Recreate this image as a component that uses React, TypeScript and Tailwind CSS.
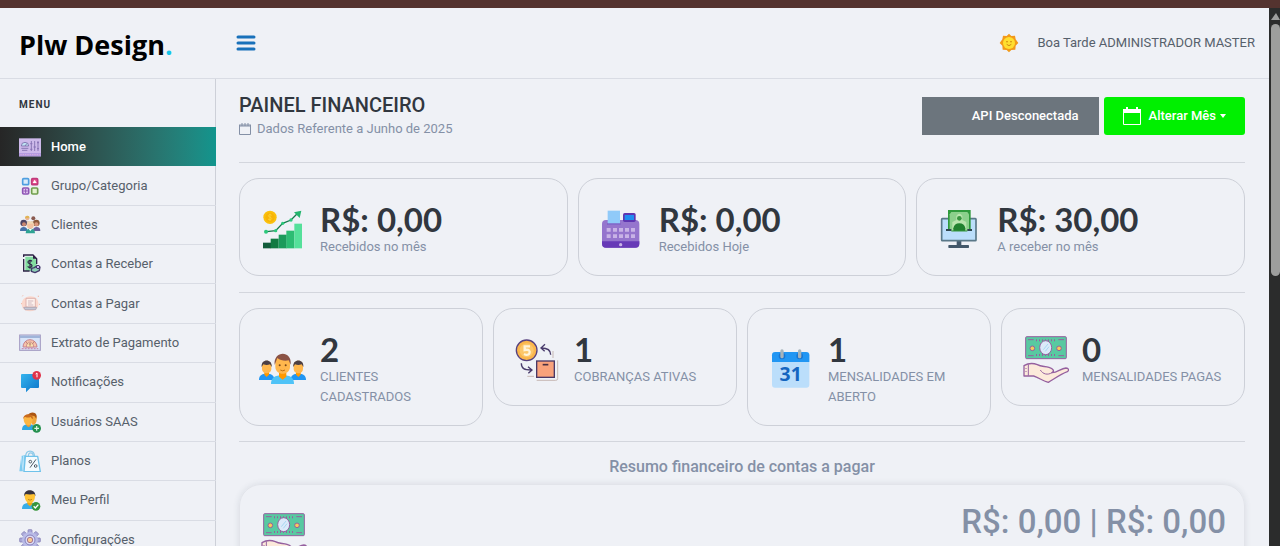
import type { ReactNode } from "react";

function MenuIcon({ children }: { children: ReactNode }) {
  return (
    <svg className="size-[22px] shrink-0" viewBox="0 0 66 66" aria-hidden="true">
      {children}
    </svg>
  );
}

function CardIcon({ children }: { children: ReactNode }) {
  return (
    <svg className="size-12 shrink-0" viewBox="0 0 144 144" aria-hidden="true">
      {children}
    </svg>
  );
}

const menuItems: { label: string; icon: ReactNode }[] = [
  {
    label: "Home",
    icon: (
      <MenuIcon>
        <rect x="0" y="7" width="66" height="54" fill="#cdb9ea" />
        <rect x="0" y="51" width="66" height="10" fill="#b49be0" />
        <path d="M7 30a11 11 0 0 1 22 0zM18 30l6-8" fill="#bfe3f3" stroke="#7b6ba8" strokeWidth="2.5" />
        <path d="M7 37h21M9 43h16M37 15v30M47 15v30M57 15v30" stroke="#7b6ba8" strokeWidth="2.5" />
        <path d="M34 23h6M44 33h6M54 20h6M34 40h6M54 38h6" stroke="#8b74b8" strokeWidth="4" />
        <path d="M4 56h58" stroke="#e9b9dc" strokeWidth="2" strokeDasharray="4 3" />
      </MenuIcon>
    )
  },
  {
    label: "Grupo/Categoria",
    icon: (
      <MenuIcon>
        <rect x="11" y="11" width="18" height="18" rx="3" fill="#d9ecfb" stroke="#4f9fe0" strokeWidth="5" />
        <rect x="38" y="11" width="18" height="18" rx="3" fill="#e8558f" stroke="#c23a7c" strokeWidth="5" />
        <rect x="11" y="39" width="18" height="18" rx="3" fill="#e9cdf3" stroke="#8d55b5" strokeWidth="5" />
        <rect x="38" y="39" width="18" height="18" rx="3" fill="#e3f2cf" stroke="#6f9d4d" strokeWidth="5" />
        <path d="M47 14l6 10H41z" fill="#fff" />
        <path d="M20 42v12M14 48h12" stroke="#8d55b5" strokeWidth="3" />
      </MenuIcon>
    )
  },
  {
    label: "Clientes",
    icon: (
      <MenuIcon>
        <circle cx="25" cy="13" r="6" fill="#e9b38f" />
        <path d="M18 13a7 7 0 0 1 14-2z" fill="#e0b354" />
        <circle cx="43" cy="13" r="6" fill="#8a5a50" />
        <path d="M18 22h14l-3 12h-8zM36 22h14l-3 12h-8z" fill="#d7bfae" />
        <circle cx="14" cy="27" r="10" fill="#4d4664" />
        <circle cx="15" cy="31" r="6" fill="#c98870" />
        <circle cx="52" cy="27" r="10" fill="#8b5a3c" />
        <circle cx="52" cy="31" r="6" fill="#d9977d" />
        <path d="M3 51c0-9 4-12 11-12s11 3 11 12z" fill="#4672a8" />
        <path d="M42 51c0-9 4-12 11-12s11 3 11 12z" fill="#6a5f98" />
        <circle cx="34" cy="33" r="11" fill="#f0d9b4" />
        <path d="M25 35a9 9 0 0 0 18 0v-6H25z" fill="#f3c3a2" />
        <path d="M20 58c0-10 5-14 14-14s14 4 14 14z" fill="#2fa394" />
        <path d="M29 45l5 6 5-6z" fill="#fff" />
      </MenuIcon>
    )
  },
  {
    label: "Contas a Receber",
    icon: (
      <MenuIcon>
        <path d="M19 11h23l11 11v32H19z" fill="#83dda0" />
        <path d="M14 12V6h28l11 11v16M14 18v36h18" fill="none" stroke="#2e2346" strokeWidth="4" />
        <path d="M42 6v11h11z" fill="#2e2346" />
        <path d="M39 25c-4-5-13-3-12 3 1 5 11 4 12 10 0 6-9 7-13 2M33 20v27" fill="none" stroke="#2e2346" strokeWidth="3.5" />
        <path d="M38 46l8-2 9-6 8 4-2 11-13 6-11-4z" fill="#8ccfb4" stroke="#43386b" strokeWidth="4" strokeLinejoin="round" />
        <circle cx="57" cy="42" r="5" fill="#cdb8ef" stroke="#43386b" strokeWidth="3" />
      </MenuIcon>
    )
  },
  {
    label: "Contas a Pagar",
    icon: (
      <MenuIcon>
        <path d="M12 20c8-12 30-14 40-4 10 12 8 28-3 35-14 7-32 4-38-6-4-8-4-18 1-25z" fill="#fbd8cd" />
        <path d="M10 10l2-3M58 8v4M6 32h3M60 34h3" stroke="#f2b7a5" strokeWidth="3" />
        <path d="M21 16h28v26H21z" fill="#fdf0ec" stroke="#d9a9a6" strokeWidth="2.5" />
        <path d="M27 24h16M27 30h11M27 36h16" stroke="#c9aeb4" strokeWidth="2.5" />
        <path d="M14 43h39l-3 7H18z" fill="#c4c7d6" stroke="#a39baa" strokeWidth="2" />
      </MenuIcon>
    )
  },
  {
    label: "Extrato de Pagamento",
    icon: (
      <MenuIcon>
        <rect x="2" y="9" width="62" height="46" fill="#d7e4f8" stroke="#a198c0" strokeWidth="3" />
        <path d="M3 11h60v7H3z" fill="#9fb4d9" />
        <path d="M12 45a21 22 0 0 1 42 0z" fill="#f6c4a8" stroke="#c78290" strokeWidth="3" />
        <path d="M22 45a11 15 0 0 1 22 0z" fill="#fbe3ae" stroke="#c78290" strokeWidth="2.5" />
        <path d="M33 32v11M29 36h8M20 28l6 8M46 28l-6 8" stroke="#b77a70" strokeWidth="2.5" />
        <path d="M8 50h50" stroke="#c98fb4" strokeWidth="4" strokeDasharray="6 3" />
      </MenuIcon>
    )
  },
  {
    label: "Notificações",
    icon: (
      <MenuIcon>
        <defs>
          <linearGradient id="bubble" x1="0" y1="0" x2="1" y2="1">
            <stop offset="0" stopColor="#35b4ee" />
            <stop offset="1" stopColor="#0c74c9" />
          </linearGradient>
        </defs>
        <path d="M9 9h48a3 3 0 0 1 3 3v36a3 3 0 0 1-3 3H34L21 64V51H9a3 3 0 0 1-3-3V12a3 3 0 0 1 3-3z" fill="url(#bubble)" />
        <circle cx="53" cy="13" r="13" fill="#e0334a" />
        <path d="M50 9l4-3v13" fill="none" stroke="#fff" strokeWidth="3" />
      </MenuIcon>
    )
  },
  {
    label: "Usuários SAAS",
    icon: (
      <MenuIcon>
        <path d="M28 20c0-16 25-18 25 0 0 12-2 20-12 22z" fill="#f0a53a" />
        <path d="M27 12C31 2 52 1 53 15l-1 8-6-8z" fill="#ab5512" />
        <path d="M9 57c0-12 7-17 20-17s18 5 18 17z" fill="#2ea7e4" />
        <path d="M22 38h13v6l-6 5-7-5z" fill="#e99d2c" />
        <path d="M14 24c0-16 27-16 27 0 0 11-5 19-13 19s-14-8-14-19z" fill="#fcb643" />
        <path d="M13 24c-2-15 26-21 29-3l-2 4-5-7c-7 3-15 1-18 0z" fill="#c96b1e" />
        <circle cx="53" cy="52" r="13" fill="#25904f" />
        <path d="M53 45v14M46 52h14" stroke="#dff7e5" strokeWidth="3.5" />
      </MenuIcon>
    )
  },
  {
    label: "Planos",
    icon: (
      <MenuIcon>
        <path d="M7 18l14-4v50H1z" fill="#7ccbf0" />
        <path d="M7 18l5 44M14 17v46" stroke="#cdeafa" strokeWidth="2.5" />
        <path d="M20 20c0-22 26-22 27 0M28 20c0-15 14-15 15 0" fill="none" stroke="#8cc9e8" strokeWidth="3.5" />
        <path d="M19 19h37l8 46H15z" fill="#f4fbfe" stroke="#6fc2ea" strokeWidth="4" strokeLinejoin="round" />
        <path d="M51 28L33 53" stroke="#4e5a66" strokeWidth="3" />
        <circle cx="34" cy="35" r="4" fill="none" stroke="#4e5a66" strokeWidth="3" />
        <circle cx="50" cy="48" r="4" fill="none" stroke="#4e5a66" strokeWidth="3" />
      </MenuIcon>
    )
  },
  {
    label: "Meu Perfil",
    icon: (
      <MenuIcon>
        <path d="M9 60c0-13 7-18 23-18s22 5 22 18z" fill="#39aee8" />
        <path d="M25 37h15v8l-7 7-8-7z" fill="#f0a716" />
        <path d="M17 20c0-20 31-20 31 0 0 13-6 22-15 22s-16-9-16-22z" fill="#ffc233" />
        <path d="M16 22C12-2 52-2 49 22l-3-7c-8 2-20 2-26 0z" fill="#37333f" />
        <path d="M27 31q6 5 12 0" fill="none" stroke="#a86d10" strokeWidth="2" />
        <circle cx="51" cy="52" r="13" fill="#37953c" />
        <path d="M44 52l5 5 9-10" fill="none" stroke="#fff" strokeWidth="4" />
      </MenuIcon>
    )
  },
  {
    label: "Configurações",
    icon: (
      <MenuIcon>
        <g fill="#aaa9d9" stroke="#7973ad" strokeWidth="2">
          {[0, 45, 90, 135].map((angle) => (
            <rect key={angle} x="27" y="2" width="12" height="62" rx="2" transform={`rotate(${angle} 33 33)`} />
          ))}
        </g>
        <circle cx="33" cy="33" r="24" fill="#b9bbe6" />
        <circle cx="33" cy="33" r="15" fill="#d9dcf5" stroke="#8780bd" strokeWidth="3" />
        <circle cx="33" cy="33" r="8" fill="#f6cb91" stroke="#a9748f" strokeWidth="3" />
      </MenuIcon>
    )
  }
];

function GrowthIcon() {
  return (
    <CardIcon>
      <circle cx="33" cy="37" r="20" fill="#fbc00c" />
      <circle cx="33" cy="37" r="14" fill="#f7b408" />
      <path d="M38 31c-4-4-11-2-10 2s9 3 10 7-7 6-11 2M33 26v22" fill="none" stroke="#fdd030" strokeWidth="3" />
      <path d="M12 113h24v17H12z" fill="#125c3b" />
      <path d="M35 101h24v29H35z" fill="#127a42" />
      <path d="M59 89h24v41H59z" fill="#1b9a5b" />
      <path d="M82 77h24v53H82z" fill="#2cbc73" />
      <path d="M106 56h23v74h-23z" fill="#55e09a" />
      <path d="M23 80l27-3 21-22 25-10 23-23" fill="none" stroke="#157a4c" strokeWidth="4" />
      <path d="M105 22l22-5-5 22z" fill="#23b56d" />
      <circle cx="21" cy="80" r="6" fill="#2cc87b" />
      <circle cx="50" cy="77" r="5" fill="#2cc87b" />
      <circle cx="71" cy="55" r="5" fill="#2cc87b" />
      <circle cx="96" cy="45" r="5" fill="#2cc87b" />
    </CardIcon>
  );
}

function RegisterIcon() {
  const keys = [26, 45, 63, 81, 99];
  return (
    <CardIcon>
      <rect x="12" y="45" width="112" height="83" rx="12" fill="#9575cd" />
      <path d="M12 109h112v7a12 12 0 0 1-12 12H24a12 12 0 0 1-12-12z" fill="#673ab7" />
      <path d="M29 17h37v41H29z" fill="#90caf9" />
      <path d="M27 57h41" stroke="#7e57c2" strokeWidth="4" />
      <rect x="75" y="24" width="38" height="27" rx="5" fill="#5e35b1" />
      <rect x="80" y="30" width="28" height="15" fill="#1f8df0" />
      {keys.map((x) => (
        <path key={x} d={`M${x} 69h12v11h-12zM${x} 88h12v11h-12z`} fill="#c8b3e6" />
      ))}
      <circle cx="68" cy="119" r="5" fill="#c8b3e6" />
    </CardIcon>
  );
}

function MonitorIcon() {
  return (
    <CardIcon>
      <path d="M62 107h14v15H62z" fill="#43586a" />
      <rect x="37" y="120" width="62" height="9" rx="2" fill="#43586a" />
      <rect x="17" y="41" width="103" height="66" rx="2" fill="#bbdefb" stroke="#5a7888" strokeWidth="5" />
      <path d="M36 15h68v63H36z" fill="#2f9a3c" />
      <path d="M46 21h48l5 7v50H41V28z" fill="#8bd08b" />
      <path d="M61 33q9-13 18 0v12l12 6v27H49V51l12-6z" fill="#b9e4ae" />
      <circle cx="70" cy="40" r="7" fill="#37953f" />
      <path d="M52 78v-8c2-10 8-15 18-15s16 5 18 15v8z" fill="#21812f" />
      <path d="M30 75h16M94 75h14" stroke="#30464f" strokeWidth="6" />
      <path d="M46 78h48" stroke="#37953f" strokeWidth="3" />
    </CardIcon>
  );
}

function SidePerson({ x }: { x: number }) {
  return (
    <g transform={`translate(${x} 0)`}>
      <path d="M-23 105c0-14 8-19 23-19s23 5 23 19z" fill="#2196f3" />
      <path d="M-7 80H7v9L0 96l-7-7z" fill="#ff9800" />
      <path d="M-14 61c0-18 28-18 28 0v10C14 89-14 89-14 71z" fill="#ffb74d" />
      <path d="M-15 66c-3-26 33-26 30 0l-5-8c-7 3-13 3-20 0z" fill="#4b3f45" />
    </g>
  );
}

function PeopleIcon() {
  return (
    <CardIcon>
      <SidePerson x={23} />
      <SidePerson x={118} />
      <path d="M36 117c0-19 11-26 35-26s34 7 34 26z" fill="#4fc3f7" />
      <path d="M60 83h22v12l-11 9-11-9z" fill="#ff9800" />
      <path d="M49 52c0-28 44-28 44 0v13c0 28-44 28-44 0z" fill="#ffb74d" />
      <path d="M47 60c-5-44 53-45 48-1l-6-13c-12 3-25 0-34-7z" fill="#8b5346" />
      <circle cx="62" cy="61" r="3" fill="#784719" />
      <circle cx="80" cy="61" r="3" fill="#784719" />
      <path d="M64 75q7 5 14 0" fill="none" stroke="#c06d13" strokeWidth="3" />
    </CardIcon>
  );
}

function ExchangeIcon() {
  return (
    <CardIcon>
      <path d="M134 76v55q0 5-6 5H71M120 48v21M43 124h20" fill="none" stroke="#c7b9b5" strokeWidth="3" />
      <circle cx="41" cy="46" r="31" fill="#fbb64c" stroke="#57417e" strokeWidth="4" />
      <circle cx="41" cy="46" r="21" fill="#fcc76a" />
      <path d="M51 34H35v11c14-3 17 3 14 11-3 5-11 4-16 1" fill="none" stroke="#fff4da" strokeWidth="7" />
      <rect x="71" y="78" width="53" height="49" fill="#f9a27b" stroke="#4a3866" strokeWidth="4" />
      <path d="M89 89h17" stroke="#4a3042" strokeWidth="5" />
      <path d="M113 59c0-15-10-20-28-20M96 28L84 39l11 10M25 85c0 16 9 20 29 20M45 95l12 10-11 10" fill="none" stroke="#493b6c" strokeWidth="4" />
    </CardIcon>
  );
}

function CalendarIcon() {
  return (
    <CardIcon>
      <rect x="15" y="21" width="112" height="107" rx="9" fill="#bbdefb" />
      <path d="M15 51V31a10 10 0 0 1 10-10h92a10 10 0 0 1 10 10v20z" fill="#2196f3" />
      <circle cx="45" cy="33" r="10" fill="#1976d2" />
      <circle cx="98" cy="33" r="10" fill="#1976d2" />
      <rect x="40" y="13" width="10" height="27" rx="5" fill="#a5b3bb" />
      <rect x="93" y="13" width="10" height="27" rx="5" fill="#a5b3bb" />
      <text x="71" y="109" textAnchor="middle" className="fill-[#1465c0] font-['Open_Sans',sans-serif] text-[58px] font-bold">
        31
      </text>
    </CardIcon>
  );
}

function HandMoneyIcon() {
  return (
    <CardIcon>
      <g stroke="#95609f" strokeWidth="3">
        <rect x="14" y="5" width="122" height="66" rx="3" fill="#58c9a1" />
        <path d="M21 14h17M112 14h17M21 62h17M112 62h17" />
        <path d="M45 16h58M45 60h58" strokeWidth="6" strokeDasharray="3 6" />
        <ellipse cx="74" cy="38" rx="18" ry="21" fill="#dbeafa" />
        <circle cx="34" cy="40" r="7" fill="#f8ca5c" />
        <circle cx="114" cy="40" r="7" fill="#f8ca5c" />
        <path d="M67 44l14-17M73 49l11-14" stroke="#a6d8f2" />
        <path
          d="M9 92c12-7 27-8 40-3 12 7 22 4 35 8 13 4 17 11 9 16 15 1 26-13 42-14 8 0 10 7 4 11-19 7-37 20-57 32-14-3-29-14-44-19H9z"
          fill="#fceadb"
          strokeLinejoin="round"
          strokeWidth="4"
        />
        <path d="M93 113c-13 8-27 5-35-8M22 88v34" fill="none" />
        <path d="M15 99v14" strokeDasharray="3 6" />
      </g>
    </CardIcon>
  );
}

function SunIcon() {
  return (
    <svg className="size-5" viewBox="0 0 60 60" aria-hidden="true">
      <path
        d="M30 2l7 7 11-1 2 11 8 11-8 8-1 12-12 1-7 7-7-7-12-1-1-12-8-8 8-11 2-11 11 1z"
        fill="#f39a19"
      />
      <circle cx="30" cy="30" r="18" fill="#ffdf30" />
      <path d="M21 27q3-3 6 0M33 27q3-3 6 0M23 34q7 8 14 0" fill="none" stroke="#d18a10" strokeWidth="3" />
    </svg>
  );
}

const monthCards = [
  { value: "R$: 0,00", label: "Recebidos no mês", icon: <GrowthIcon /> },
  { value: "R$: 0,00", label: "Recebidos Hoje", icon: <RegisterIcon /> },
  { value: "R$: 30,00", label: "A receber no mês", icon: <MonitorIcon /> }
];

const countCards = [
  { value: "2", label: "CLIENTES CADASTRADOS", icon: <PeopleIcon /> },
  { value: "1", label: "COBRANÇAS ATIVAS", icon: <ExchangeIcon /> },
  { value: "1", label: "MENSALIDADES EM ABERTO", icon: <CalendarIcon /> },
  { value: "0", label: "MENSALIDADES PAGAS", icon: <HandMoneyIcon /> }
];

function StatCard({ value, label, icon }: { value: string; label: string; icon: ReactNode }) {
  return (
    <article className="flex items-center gap-[13px] rounded-[20px] border border-[#cdd0d8] pt-[22px] pr-4 pb-[18px] pl-[19px]">
      {icon}
      <div className="min-w-0">
        <p className="font-[Lato,sans-serif] text-[33px] leading-9 font-bold text-[#31373f]">{value}</p>
        <p className="text-[13px] leading-5 text-[#8490a6]">{label}</p>
      </div>
    </article>
  );
}

function Sidebar() {
  return (
    <aside className="w-[216px] shrink-0 border-r border-[#cdd0d8]">
      <h2 className="pt-[22px] pb-[18px] pl-[19px] text-[10px] leading-2 font-bold tracking-widest text-[#31373f]">
        MENU
      </h2>
      <nav aria-label="Menu" className="-mr-px">
        <ul className="grid min-h-[433px] auto-rows-fr">
          {menuItems.map((item, index) => (
            <li key={item.label} className="flex">
              <a
                href="#"
                aria-current={index === 0 ? "page" : undefined}
                className={`flex flex-1 items-center gap-[10px] pl-[19px] text-[13px] leading-5 ${
                  index === 0
                    ? "bg-linear-to-r from-[#262626] to-[#11958d] font-medium text-white"
                    : "border-b border-[#d9dce4] text-[#56606b]"
                }`}
              >
                {item.icon}
                {item.label}
              </a>
            </li>
          ))}
        </ul>
      </nav>
    </aside>
  );
}

export default function App() {
  return (
    <div className="flex h-screen flex-col overflow-hidden bg-[#eff1f6] font-[Roboto,sans-serif]">
      <div className="h-2 shrink-0 bg-[#54332f]" />
      <div className="flex min-h-0 flex-1">
        <div className="flex min-w-0 flex-1 flex-col">
          <header className="flex h-[71px] shrink-0 items-center border-b border-[#d9dce4] pr-[14px] pl-[19px]">
            <a href="#" className="w-[217px] pt-1 font-['Open_Sans',sans-serif] text-[27px] leading-8 font-bold text-black">
              Plw Design<span className="text-[#16c5e8]">.</span>
            </a>
            <button type="button" aria-label="Abrir menu">
              <svg className="h-4 w-5" viewBox="0 0 20 16" aria-hidden="true">
                <path d="M2 2h16M2 8h16M2 14h16" stroke="#1971ba" strokeWidth="3" strokeLinecap="round" />
              </svg>
            </button>
            <div className="ml-auto flex items-center gap-[18px] text-[13px] leading-5 text-[#56606b]">
              <SunIcon />
              <span>Boa Tarde ADMINISTRADOR MASTER</span>
            </div>
          </header>

          <div className="flex min-h-0 flex-1">
            <Sidebar />
            <main className="min-w-0 flex-1 overflow-hidden pt-[18px] pr-6 pl-[23px]">
              <div className="flex justify-between">
                <div>
                  <h1 className="text-xl leading-4 font-medium text-[#31373f]">PAINEL FINANCEIRO</h1>
                  <p className="flex items-center gap-[6px] pt-[6px] text-[13px] leading-5 text-[#8490a6]">
                    <svg className="size-3" viewBox="0 0 12 12" aria-hidden="true">
                      <path d="M0 2h12M0 3h12M3 0v3M6 0v3M9 0v3M.5 2v9.500h11V2" fill="none" stroke="#8490a6" />
                    </svg>
                    Dados Referente a Junho de 2025
                  </p>
                </div>
                <div className="flex gap-[5px] text-[13px] font-medium text-white">
                  <button type="button" className="h-[38px] bg-[#6c757d] pr-5 pl-[50px]">
                    API Desconectada
                  </button>
                  <button type="button" className="flex h-[38px] items-center rounded-[3px] bg-[#00f000] px-[19px]">
                    <svg className="mr-2 size-[18px]" viewBox="0 0 18 18" aria-hidden="true">
                      <path d="M0 2h18v4H0zM3 0h2v3H3zM13 0h2v3h-2z" fill="#fff" />
                      <path d="M.5 3v14.500h17V3" fill="none" stroke="#fff" />
                    </svg>
                    Alterar Mês
                    <svg className="ml-1 h-1 w-[6px]" viewBox="0 0 6 4" aria-hidden="true">
                      <path d="M0 0h6L3 4z" fill="#fff" />
                    </svg>
                  </button>
                </div>
              </div>

              <hr className="mt-[23px] border-[#d3d6dd]" />
              <section className="mt-[15px] grid grid-cols-3 items-start gap-[10px]">
                {monthCards.map((card) => (
                  <StatCard key={card.label} {...card} />
                ))}
              </section>
              <hr className="mt-4 border-[#d3d6dd]" />
              <section className="mt-[15px] grid grid-cols-4 items-start gap-[10px]">
                {countCards.map((card) => (
                  <StatCard key={card.label} {...card} />
                ))}
              </section>
              <hr className="mt-[15px] border-[#d3d6dd]" />

              <section>
                <h2 className="pt-[15px] pb-[7px] text-center text-base leading-5 font-medium text-[#8490a6]">
                  Resumo financeiro de contas a pagar
                </h2>
                <div className="flex justify-between rounded-[22px] border border-[#e2e4ea] pt-[27px] pr-[18px] pb-6 pl-[19px] shadow-[0_0_6px_rgba(60,70,90,0.12)]">
                  <HandMoneyIcon />
                  <p className="text-[33px] leading-5 font-medium text-[#8490a6]">R$: 0,00 | R$: 0,00</p>
                </div>
              </section>
            </main>
          </div>
        </div>

        <div className="w-[11px] shrink-0 bg-[#2b2c2c] pt-[5px] pl-[2px]" aria-hidden="true">
          <svg className="mb-1 h-[7px] w-[9px]" viewBox="0 0 9 7">
            <path d="M5 0l4 7H0z" fill="#9d9e9d" />
          </svg>
          <div className="h-[252px] rounded-full bg-[#9d9e9d]" />
        </div>
      </div>
    </div>
  );
}
